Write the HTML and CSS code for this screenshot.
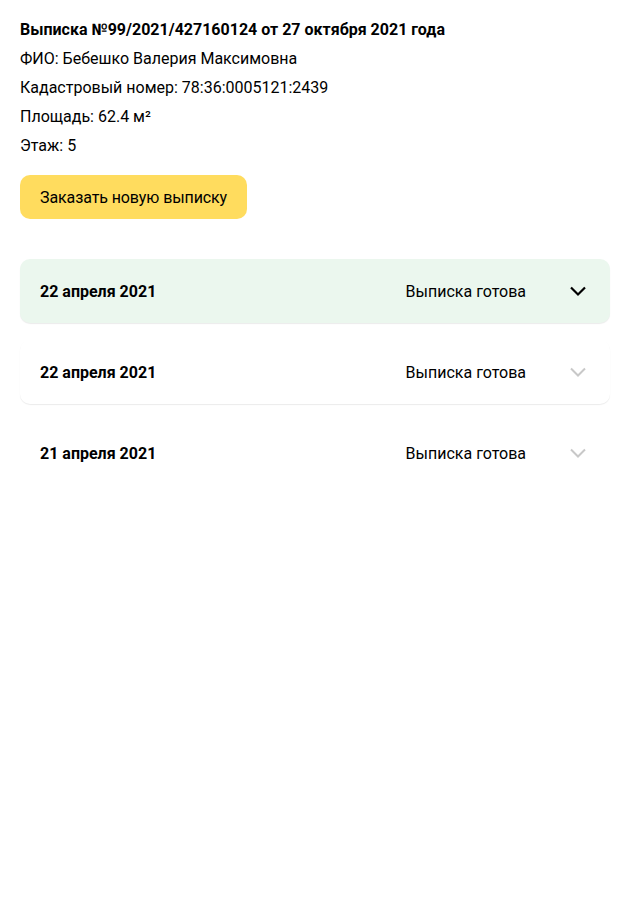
FILE: index.html
```html
<!DOCTYPE html>
<html lang="ru">
<head>
<meta charset="utf-8">
<link rel="stylesheet" href="styles.css">
</head>
<body>
<main class="page">
  <section class="info">
    <h1 class="title">Выписка №99/2021/427160124 от 27 октября 2021 года</h1>
    <p class="line">ФИО: Бебешко Валерия Максимовна</p>
    <p class="line">Кадастровый номер: 78:36:0005121:2439</p>
    <p class="line">Площадь: 62.4 м²</p>
    <p class="line">Этаж: 5</p>
  </section>
  <button class="order-btn" type="button">Заказать новую выписку</button>
  <ul class="list">
    <li class="item item-active">
      <span class="date">22 апреля 2021</span>
      <span class="status">Выписка готова</span>
      <svg class="chev" width="24" height="24" viewBox="0 0 24 24"><path d="M5 8.5 L12 15.5 L19 8.5" fill="none" stroke="#000" stroke-width="2.2"/></svg>
    </li>
    <li class="item">
      <span class="date">22 апреля 2021</span>
      <span class="status">Выписка готова</span>
      <svg class="chev" width="24" height="24" viewBox="0 0 24 24"><path d="M5 8.5 L12 15.5 L19 8.5" fill="none" stroke="#c8c8c8" stroke-width="2"/></svg>
    </li>
    <li class="item item-last">
      <span class="date">21 апреля 2021</span>
      <span class="status">Выписка готова</span>
      <svg class="chev" width="24" height="24" viewBox="0 0 24 24"><path d="M5 8.5 L12 15.5 L19 8.5" fill="none" stroke="#c8c8c8" stroke-width="2"/></svg>
    </li>
  </ul>
</main>
</body>
</html>
```
FILE: styles.css
```css
* { box-sizing: border-box; }
body {
  margin: 0;
  background: #fff;
  color: #000;
  font-family: Roboto, "Noto Sans", sans-serif;
  font-size: 16px;
}
.page {
  padding: 15px 20px 20px;
}
.info {
  display: flex;
  flex-direction: column;
}
.title {
  margin: 0;
  font-size: 16px;
  font-weight: 700;
  line-height: 29px;
}
.line {
  margin: 0;
  line-height: 29px;
}
.order-btn {
  margin-top: 15px;
  height: 44px;
  padding: 0 20px;
  border: 0;
  border-radius: 10px;
  background: #ffdc5e;
  color: #000;
  font-family: inherit;
  font-size: 16px;
  letter-spacing: -0.1px;
  cursor: pointer;
}
.list {
  list-style: none;
  margin: 40px 0 0;
  padding: 0;
  display: flex;
  flex-direction: column;
  gap: 17px;
}
.item {
  display: flex;
  align-items: center;
  height: 64px;
  padding: 0 20px;
  border-radius: 10px;
  background: #fff;
  box-shadow: 0 1px 1px rgba(0, 0, 0, 0.08);
}
.item-active {
  background: #ebf7ee;
}
.item-last {
  box-shadow: none;
}
.date {
  font-weight: 700;
  flex: 1;
}
.status {
  margin-right: 40px;
}
.chev {
  display: block;
}
```
